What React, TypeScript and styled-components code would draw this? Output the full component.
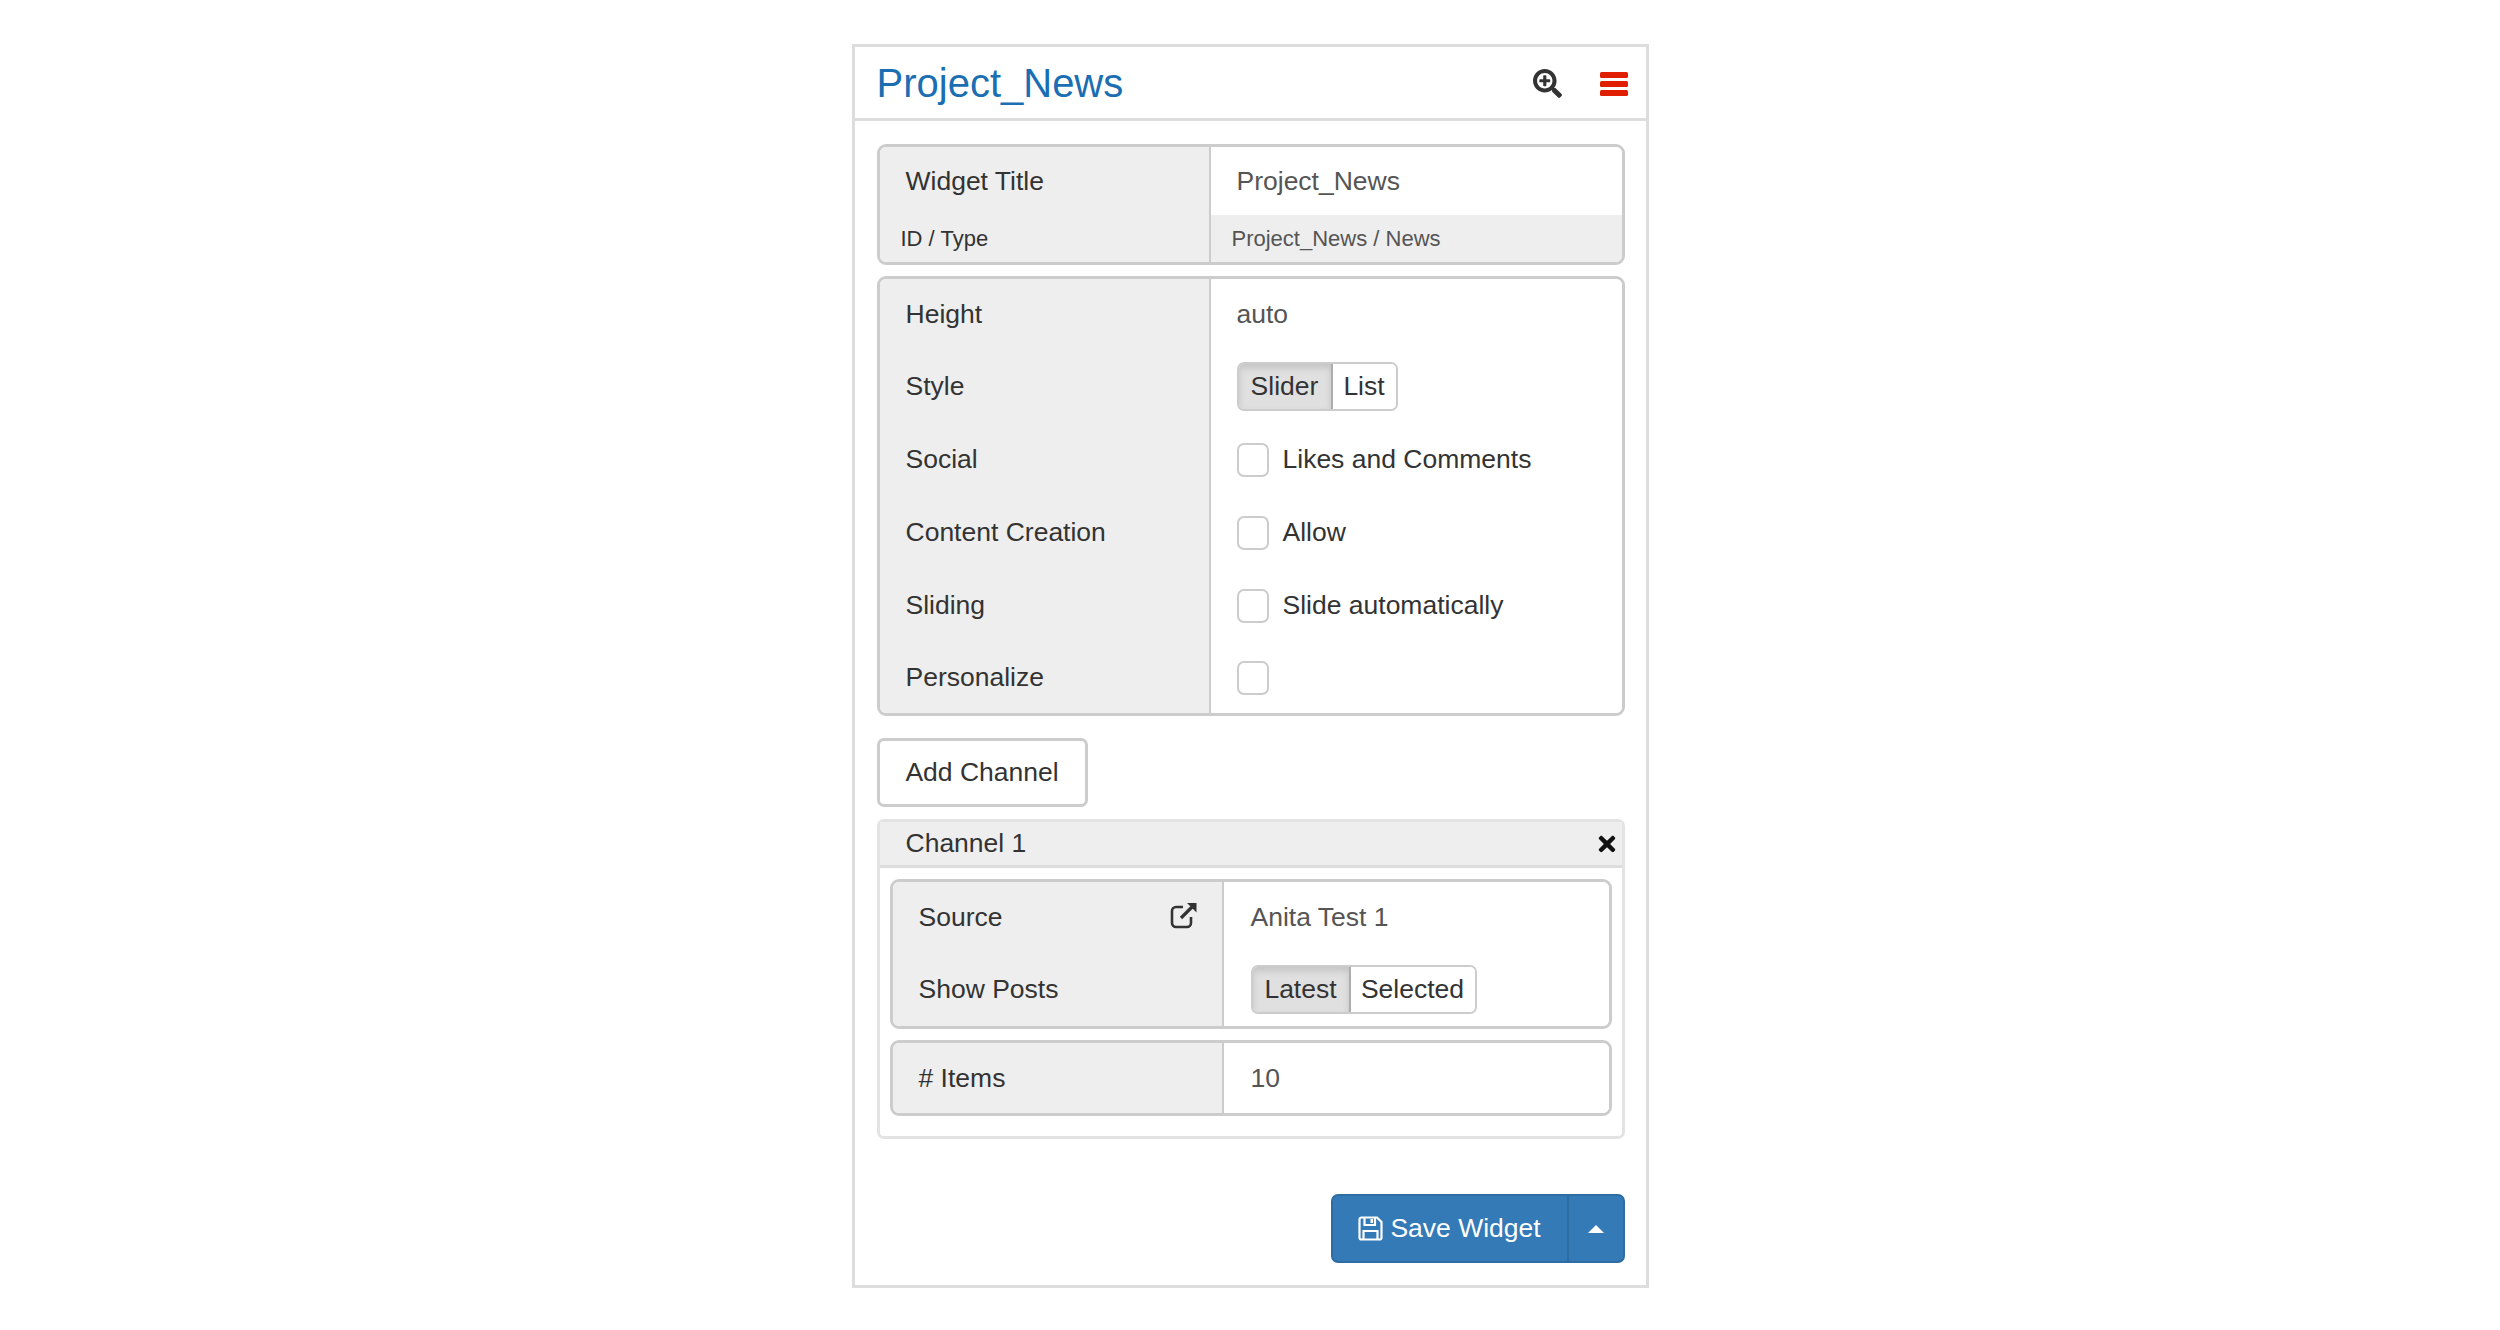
import React from "react";
import styled, { createGlobalStyle } from "styled-components";
import { FaSearchPlus, FaTimes } from "react-icons/fa";

const GlobalStyle = createGlobalStyle`
  html, body {
    margin: 0;
    background: #fff;
    font-family: "Liberation Sans", Arial, sans-serif;
    color: #333;
  }
`;

const Page = styled.div`
  height: 1330px;
  padding-top: 44px;
  box-sizing: border-box;
`;

const Panel = styled.div`
  width: 797px;
  height: 1244px;
  margin: 0 auto;
  box-sizing: border-box;
  border: 3px solid #ddd;
  display: flex;
  flex-direction: column;
`;

const Header = styled.div`
  height: 74px;
  flex-shrink: 0;
  box-sizing: border-box;
  border-bottom: 3px solid #ddd;
  padding: 2px 18px 0 22px;
  display: flex;
  align-items: center;
`;

const Title = styled.div`
  font-size: 40px;
  color: #1b6eb2;
  flex: 1;
`;

const HeaderIcons = styled.div`
  display: flex;
  align-items: center;
  gap: 38px;
`;

const Body = styled.div`
  flex: 1;
  padding: 23px 21px 0 22px;
  display: flex;
  flex-direction: column;
`;

const Section = styled.div<{ $mb?: number }>`
  border: 3px solid #ccc;
  border-radius: 9px;
  overflow: hidden;
  margin-bottom: ${(p) => p.$mb ?? 11}px;
`;

const Row = styled.div<{ $h: number; $label: number }>`
  display: grid;
  grid-template-columns: ${(p) => p.$label}px 1fr;
  height: ${(p) => p.$h}px;
`;

const Label = styled.div<{ $small?: boolean }>`
  background: #eee;
  border-right: 2px solid #ccc;
  display: flex;
  align-items: center;
  justify-content: space-between;
  font-size: ${(p) => (p.$small ? 22 : 26.5)}px;
  padding: 0 24px 0 ${(p) => (p.$small ? 21 : 26)}px;
`;

const Value = styled.div<{ $muted?: boolean; $small?: boolean; $inset?: number }>`
  display: flex;
  align-items: center;
  padding-left: ${(p) => p.$inset ?? (p.$small ? 21 : 26)}px;
  font-size: ${(p) => (p.$small ? 22 : 26.5)}px;
  color: #555;
  background: ${(p) => (p.$muted ? "#eee" : "#fff")};
`;

const Toggle = styled.div`
  display: flex;
  height: 49px;
  border: 2px solid #ccc;
  border-radius: 7px;
  overflow: hidden;
  box-sizing: border-box;
`;

const ToggleOption = styled.div<{ $active?: boolean; $w: number }>`
  width: ${(p) => p.$w}px;
  display: flex;
  align-items: center;
  justify-content: center;
  font-size: 26.5px;
  color: #333;
  background: ${(p) => (p.$active ? "#e0e0e0" : "#fff")};
  box-shadow: ${(p) => (p.$active ? "inset 0 4px 7px rgba(0,0,0,.13)" : "none")};
  border-right: ${(p) => (p.$active ? "2px solid #adadad" : "none")};
`;

const CheckRow = styled.div`
  display: flex;
  align-items: center;
  gap: 14px;
  color: #333;
  font-size: 26.5px;
`;

const CheckBox = styled.span`
  display: block;
  width: 32px;
  height: 34px;
  box-sizing: border-box;
  border: 2px solid #ccc;
  border-radius: 7px;
  background: #fff;
`;

const AddButton = styled.div`
  width: 211px;
  height: 69px;
  box-sizing: border-box;
  border: 3px solid #ccc;
  border-radius: 7px;
  display: flex;
  align-items: center;
  justify-content: center;
  font-size: 26.5px;
  color: #333;
  margin-bottom: 12px;
`;

const Channel = styled.div`
  height: 320px;
  box-sizing: border-box;
  border: 3px solid #e3e3e3;
  border-radius: 7px;
`;

const ChannelHeader = styled.div`
  height: 43px;
  background: #eee;
  border-bottom: 3px solid #ddd;
  display: flex;
  align-items: center;
  justify-content: space-between;
  padding: 0 3px 0 26px;
  font-size: 26.5px;
`;

const ChannelBody = styled.div`
  padding: 11px 10px 0;
`;

const Footer = styled.div`
  display: flex;
  justify-content: flex-end;
  margin-top: 55px;
`;

const SaveGroup = styled.div`
  display: flex;
  height: 69px;
  border-radius: 7px;
  overflow: hidden;
  background: #337ab7;
  border: 2px solid #2e6da4;
  box-sizing: border-box;
  color: #fff;
`;

const SaveMain = styled.div`
  width: 234px;
  display: flex;
  align-items: center;
  justify-content: center;
  gap: 7px;
  font-size: 26.5px;
  border-right: 2px solid #2e6da4;
`;

const SaveCaret = styled.div`
  width: 54px;
  display: flex;
  align-items: center;
  justify-content: center;
  &::after {
    content: "";
    border-left: 8px solid transparent;
    border-right: 8px solid transparent;
    border-bottom: 8px solid #fff;
  }
`;

const LinkIcon = styled.svg`
  margin-bottom: 5px;
`;

const MenuIcon = () => (
  <svg width="28" height="24" viewBox="0 0 28 24" fill="#e01e00">
    <rect x="0" y="0" width="28" height="6" rx="1.5" />
    <rect x="0" y="9" width="28" height="6" rx="1.5" />
    <rect x="0" y="18" width="28" height="6" rx="1.5" />
  </svg>
);

const ExternalLink = () => (
  <LinkIcon width="28" height="28" viewBox="0 0 28 28" fill="none" stroke="#333" strokeWidth="2.6">
    <path d="M21 16v6a4 4 0 0 1-4 4H6a4 4 0 0 1-4-4V10a4 4 0 0 1 4-4h7" />
    <path d="M11 17L25 3" strokeWidth="3.2" />
    <path d="M17 2h9.5v9.5z" fill="#333" stroke="none" />
  </LinkIcon>
);

const SaveIcon = () => (
  <svg width="25" height="25" viewBox="0 0 25 25" fill="none" stroke="#fff" strokeWidth="2.2">
    <path d="M3 1.5h16l4.5 4.5v15.5a2 2 0 0 1-2 2h-18a2 2 0 0 1-2-2v-18a2 2 0 0 1 2-2z" />
    <path d="M6.5 1.5v7.5h10.5V1.5" />
    <path d="M5.5 23.5v-8.5h14v8.5" />
    <rect x="12.5" y="3" width="2.5" height="4" fill="#fff" stroke="none" />
  </svg>
);

export default function App() {
  return (
    <Page>
      <GlobalStyle />
      <Panel>
        <Header>
          <Title>Project_News</Title>
          <HeaderIcons>
            <FaSearchPlus size={29} color="#333" />
            <MenuIcon />
          </HeaderIcons>
        </Header>
        <Body>
          <Section>
            <Row $h={68} $label={331}>
              <Label>Widget Title</Label>
              <Value>Project_News</Value>
            </Row>
            <Row $h={47} $label={331}>
              <Label $small>ID / Type</Label>
              <Value $muted $small>Project_News / News</Value>
            </Row>
          </Section>
          <Section $mb={22}>
            <Row $h={71} $label={331}>
              <Label>Height</Label>
              <Value>auto</Value>
            </Row>
            <Row $h={73} $label={331}>
              <Label>Style</Label>
              <Value>
                <Toggle>
                  <ToggleOption $active $w={92}>Slider</ToggleOption>
                  <ToggleOption $w={63}>List</ToggleOption>
                </Toggle>
              </Value>
            </Row>
            <Row $h={73} $label={331}>
              <Label>Social</Label>
              <Value>
                <CheckRow>
                  <CheckBox />
                  Likes and Comments
                </CheckRow>
              </Value>
            </Row>
            <Row $h={73} $label={331}>
              <Label>Content Creation</Label>
              <Value>
                <CheckRow>
                  <CheckBox />
                  Allow
                </CheckRow>
              </Value>
            </Row>
            <Row $h={73} $label={331}>
              <Label>Sliding</Label>
              <Value>
                <CheckRow>
                  <CheckBox />
                  Slide automatically
                </CheckRow>
              </Value>
            </Row>
            <Row $h={71} $label={331}>
              <Label>Personalize</Label>
              <Value>
                <CheckBox />
              </Value>
            </Row>
          </Section>
          <AddButton>Add Channel</AddButton>
          <Channel>
            <ChannelHeader>
              Channel 1
              <FaTimes size={24} color="#111" />
            </ChannelHeader>
            <ChannelBody>
              <Section>
                <Row $h={70} $label={331}>
                  <Label>
                    Source
                    <ExternalLink />
                  </Label>
                  <Value $inset={27}>Anita Test 1</Value>
                </Row>
                <Row $h={74} $label={331}>
                  <Label>Show Posts</Label>
                  <Value $inset={27}>
                    <Toggle>
                      <ToggleOption $active $w={96}>Latest</ToggleOption>
                      <ToggleOption $w={124}>Selected</ToggleOption>
                    </Toggle>
                  </Value>
                </Row>
              </Section>
              <Section>
                <Row $h={70} $label={331}>
                  <Label># Items</Label>
                  <Value $inset={27}>10</Value>
                </Row>
              </Section>
            </ChannelBody>
          </Channel>
          <Footer>
            <SaveGroup>
              <SaveMain>
                <SaveIcon />
                Save Widget
              </SaveMain>
              <SaveCaret />
            </SaveGroup>
          </Footer>
        </Body>
      </Panel>
    </Page>
  );
}
